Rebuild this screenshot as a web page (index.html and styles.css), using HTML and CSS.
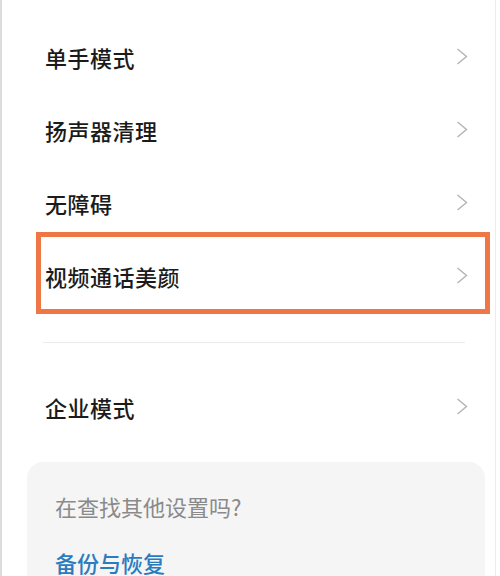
FILE: index.html
```html
<!DOCTYPE html>
<html lang="zh-CN">
<head>
    <meta charset="UTF-8">
    <meta name="viewport" content="width=device-width, initial-scale=1.0">
    <title>更多设置</title>
    <link rel="stylesheet" href="styles.css">
</head>
<body>
    <div class="screen">
        <div class="list">
            <div class="row"><span>单手模式</span><svg class="chev" viewBox="0 0 12 17"><path d="M1.5 1 L10.5 8.5 L1.5 16"/></svg></div>
            <div class="row"><span>扬声器清理</span><svg class="chev" viewBox="0 0 12 17"><path d="M1.5 1 L10.5 8.5 L1.5 16"/></svg></div>
            <div class="row"><span>无障碍</span><svg class="chev" viewBox="0 0 12 17"><path d="M1.5 1 L10.5 8.5 L1.5 16"/></svg></div>
            <div class="row"><span>视频通话美颜</span><svg class="chev" viewBox="0 0 12 17"><path d="M1.5 1 L10.5 8.5 L1.5 16"/></svg></div>
            <div class="highlight"></div>
        </div>
        <div class="divider"></div>
        <div class="row single"><span>企业模式</span><svg class="chev" viewBox="0 0 12 17"><path d="M1.5 1 L10.5 8.5 L1.5 16"/></svg></div>

        <div class="card">
            <p class="card-title">在查找其他设置吗?</p>
            <a class="card-link" href="#">备份与恢复</a>
        </div>
    </div>
</body>
</html>
```

FILE: styles.css
```css
body {
    margin: 0;
    background-color: white;
    font-family: "Noto Sans CJK SC", "Noto Sans", sans-serif;
}
.screen {
    width: 493px;
    height: 576px;
    overflow: hidden;
    border-left: 2px solid #dcdcdc;
    border-right: 1px solid #ececec;
}
.list {
    position: relative;
    padding-top: 20px;
}
.row {
    display: flex;
    align-items: center;
    justify-content: space-between;
    height: 73px;
    margin: 0 27px 0 43px;
    font-size: 22px;
    font-weight: 500;
    letter-spacing: 0.5px;
    color: #1b1b1b;
}
.chev {
    width: 12px;
    height: 17px;
    fill: none;
    stroke: #b3b3b3;
    stroke-width: 1.4;
}
/* annotation box drawn over the fourth row */
.highlight {
    position: absolute;
    left: 34px;
    top: 232px;
    width: 444px;
    height: 72px;
    border: 5px solid #ef7645;
}
.divider {
    height: 1px;
    margin: 30px 30px 0 41px;
    background-color: #ebebeb;
}
.row.single {
    margin-top: 27px;
}
.card {
    margin: 19px 10px 0 25px;
    padding: 28px 28px 40px;
    border-radius: 16px;
    background-color: #f5f5f5;
}
.card-title {
    margin: 0;
    font-size: 22px;
    line-height: 32px;
    color: #8a8a8a;
}
.card-link {
    display: block;
    margin-top: 24px;
    font-size: 22px;
    font-weight: 500;
    line-height: 32px;
    color: #2b7bbf;
    text-decoration: none;
}
```
